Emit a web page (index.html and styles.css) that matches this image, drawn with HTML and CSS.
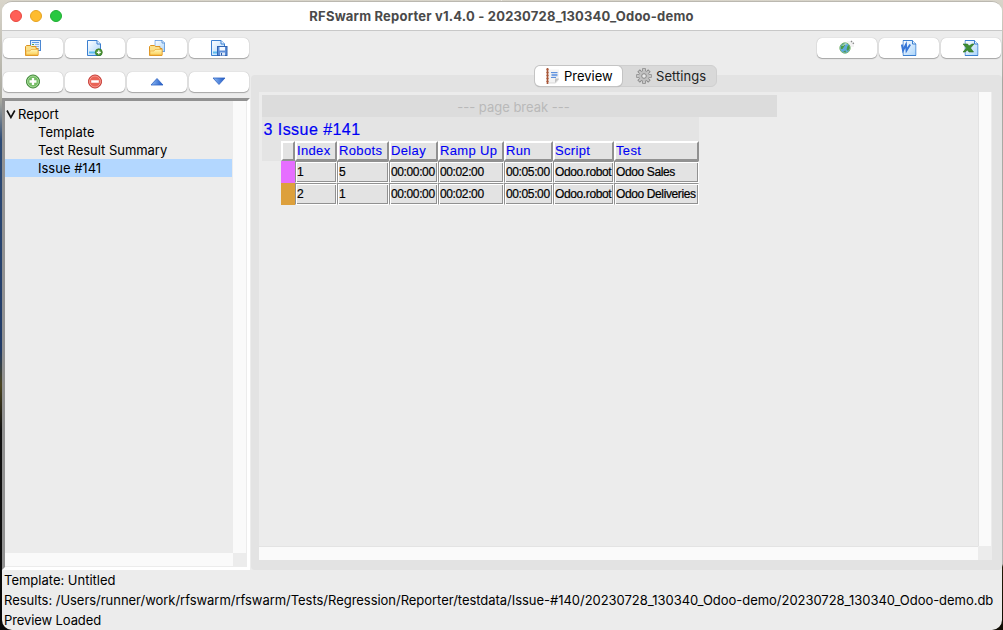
FILE: index.html
```
<!DOCTYPE html>
<html lang="en">
<head>
<meta charset="utf-8">
<title>RFSwarm Reporter</title>
<link rel="stylesheet" href="styles.css">
</head>
<body>
<svg class="defs" width="0" height="0">
  <defs>
    <linearGradient id="gDoc" x1="0" y1="0" x2="1" y2="1"><stop offset="0" stop-color="#ffffff"/><stop offset="1" stop-color="#a9d4fb"/></linearGradient>
    <linearGradient id="gFold" x1="0" y1="0" x2="0" y2="1"><stop offset="0" stop-color="#fff6b8"/><stop offset="1" stop-color="#fbd05a"/></linearGradient>
    <linearGradient id="gBlue" x1="0" y1="0" x2="1" y2="0"><stop offset="0" stop-color="#8fbcf5"/><stop offset="1" stop-color="#1d56c4"/></linearGradient>
    <symbol id="doc" viewBox="0 0 14 16"><path d="M.5.5h9.500l3.500 3.500v11.500H.5z" fill="url(#gDoc)" stroke="#3b7fd0"/><path d="M10 .5V4h3.500" fill="#e6f3ff" stroke="#3b7fd0"/></symbol>
    <symbol id="folder" viewBox="0 0 14 11"><path d="M.5 10.500V1.500l1-1h4l1 1h4.500v2h2v7z" fill="#fbe08a" stroke="#dd9321"/><path d="M1 10V6h4l1-1.500h7V10z" fill="url(#gFold)" stroke="#e9a93a" stroke-width=".7"/></symbol>
  </defs>
</svg>
<div class="window">
  <header class="titlebar">
    <div class="lights"><i class="light red"></i><i class="light amber"></i><i class="light green"></i></div>
    <h1 class="title">RFSwarm Reporter v1.4.0 - 20230728_130340_Odoo-demo</h1>
  </header>
  <main class="content">
    <section class="left">
      <div class="buttons">
        <button class="btn"><svg width="16" height="16"><rect x="5.500" y=".5" width="10" height="10" fill="#e4f1ff" stroke="#4b87d2"/><path d="M7 2.500h7" stroke="#5b9be6"/><path d="M7 4.500h2M7 6.500h2" stroke="#59a03c"/><path d="M10 4.500h4M10 6.500h4M9 8.500h5" stroke="#8db5e6"/><use href="#folder" x="0" y="5" width="14" height="11"/></svg></button>
        <button class="btn"><svg width="16" height="16"><use href="#doc" x="0" y="0" width="14" height="16"/><path d="M2 12.500h8" stroke="#5dbdf0" stroke-width="2"/><circle cx="11.800" cy="12.300" r="3.500" fill="#4e9a37" stroke="#34701f" stroke-width=".7"/><path d="M9.800 12.300h4M11.800 10.300v4" stroke="#fff" stroke-width="1.300"/></svg></button>
        <button class="btn"><svg width="16" height="16"><use href="#doc" x="5.500" y="0" width="10.500" height="12"/><use href="#folder" x="0" y="5" width="14" height="11"/></svg></button>
        <button class="btn"><svg width="17" height="16"><use href="#doc" x="0" y="0" width="14" height="16"/><path d="M2 12.500h5" stroke="#5dbdf0" stroke-width="2"/><rect x="6.500" y="6.500" width="9.500" height="9" fill="#5c8ed8" stroke="#3264b2"/><path d="M8.500 7h5.500v3.500H8.500z" fill="#f4f9ff"/><path d="M9 12.500h5V15.500H9z" fill="#dce8f8"/><path d="M10.500 13v2.500" stroke="#285aa8"/></svg></button>
      </div>
      <div class="buttons second">
        <button class="btn"><svg width="16" height="16"><circle cx="8" cy="7.500" r="6.500" fill="#4da044" stroke="#35802e"/><circle cx="8" cy="7.500" r="5.500" fill="#75bd66" stroke="#b4dfa5" stroke-width=".9"/><path d="M4.500 7.500h7M8 4v7" stroke="#fff" stroke-width="2.300"/></svg></button>
        <button class="btn"><svg width="16" height="16"><circle cx="8" cy="7.500" r="6.500" fill="#dc4038" stroke="#c2332c"/><circle cx="8" cy="7.500" r="5.500" fill="#ea6356" stroke="#f7a49b" stroke-width=".9"/><path d="M4.200 7.500h7.600" stroke="#fff" stroke-width="2.600"/></svg></button>
        <button class="btn"><svg width="14" height="14"><path d="M1 10 7 3.500l6 6.500z" fill="url(#gBlue)" stroke="#2d62c2" stroke-width=".8"/></svg></button>
        <button class="btn"><svg width="14" height="14"><path d="M1 3h12L7 9.500z" fill="url(#gBlue)" stroke="#2d62c2" stroke-width=".8"/></svg></button>
      </div>
      <div class="tree">
        <ul class="nodes">
          <li class="node root"><svg class="chev" width="10" height="10"><path d="m1 1.500 3.900 7 3.900-7" fill="none" stroke="#111" stroke-width="1.600"/></svg>Report</li>
          <li class="node child">Template</li>
          <li class="node child wide">Test Result Summary</li>
          <li class="node child selected">Issue #141</li>
        </ul>
        <div class="vbar"></div>
        <div class="hbar"></div>
      </div>
    </section>
    <section class="right">
      <div class="buttons exports">
        <button class="btn"><svg width="16" height="16"><path d="M8 1h4l3 3v3H8z" fill="#f2f2f2"/><path d="m12 1 3 3" stroke="#888" stroke-width="1.300" stroke-dasharray="1.500 1"/><circle cx="6" cy="8" r="5.200" fill="#5fa9dc" stroke="#7fb873"/><path d="M2 6.500 4.500 3.500l2 .5-1 2-2 3-1.500 0zM8.500 6l1.500-1 .8 3-1.800 3-1.500-1.500zM4 11.500l2.500-1 .5 2z" fill="#4b9c44"/><path d="M3.500 6q2-3 4-2" stroke="#d8f0df" fill="none"/></svg></button>
        <button class="btn"><svg width="16" height="16"><use href="#doc" x="1.500" y="0" width="14" height="16"/><path d="m.8 4.500 1.200 6 3-6 .5 6 3.700-6" fill="none" stroke="#3777d8" stroke-width="1.900"/></svg></button>
        <button class="btn"><svg width="16" height="16"><use href="#doc" x="1.500" y="0" width="14" height="16"/><path d="M0 4h4.500L6 6l3-2h2L7.500 8l3 4H6L4.500 10 2 12H0l3.500-4z" fill="#3f8e32" stroke="#28701e" stroke-width=".6"/></svg></button>
      </div>
      <div class="notebook">
        <nav class="tabs">
          <span class="tab active"><svg width="15" height="16"><path d="M3.500 1.500H14V11l-4 4H3.500z" fill="#f3f3f3"/><path d="M14 10.500h-4V15z" fill="#c3c3c3"/><path d="M3.500 15h7l3.500-4" fill="none" stroke="#ccc" stroke-width=".7"/><path d="M1 1.500h3M1 4.500h3M1 7.500h3M1 10.500h3M1 13.500h3" stroke="#d8a088"/><path d="M2.500 0v16" stroke="#a6573a" stroke-width="1.700"/><path d="M6 4.500h6.500M6 9.500h5" stroke="#5c8fdc" stroke-width="1.200"/><path d="M6.500 7h6" stroke="#7ba5e4" stroke-width="2.400"/></svg>Preview</span>
          <span class="tab idle"><svg width="16" height="16"><g stroke="#858585" stroke-width="3.600"><path d="M8 .3v15.400M.3 8h15.400M2.600 2.600l10.800 10.800M13.400 2.600 2.600 13.400"/></g><g stroke="#c6c6c6" stroke-width="2"><path d="M8 1v14M1 8h14M3.100 3.100l9.800 9.800M12.900 3.100l-9.800 9.800"/></g><circle cx="8" cy="8" r="5" fill="#c0c0c0"/><circle cx="8" cy="8" r="2.300" fill="#e9e9e9" stroke="#888"/></svg>Settings</span>
        </nav>
        <div class="canvas">
          <div class="page">
            <div class="pagebreak">--- page break ---</div>
            <div class="report">
              <h2 class="heading">3 Issue #141</h2>
              <div class="sheet">
                <div class="hd"></div><div class="hd">Index</div><div class="hd">Robots</div><div class="hd">Delay</div><div class="hd">Ramp Up</div><div class="hd">Run</div><div class="hd">Script</div><div class="hd">Test</div>
                <div class="swatch pink"></div><div class="cell">1</div><div class="cell">5</div><div class="cell">00:00:00</div><div class="cell">00:02:00</div><div class="cell">00:05:00</div><div class="cell">Odoo.robot</div><div class="cell">Odoo Sales</div>
                <div class="swatch gold"></div><div class="cell">2</div><div class="cell">1</div><div class="cell">00:00:00</div><div class="cell">00:02:00</div><div class="cell">00:05:00</div><div class="cell">Odoo.robot</div><div class="cell">Odoo Deliveries</div>
              </div>
            </div>
          </div>
          <div class="vbar"></div>
          <div class="hbar"></div>
        </div>
      </div>
    </section>
  </main>
  <footer class="status">
    <div>Template: Untitled</div>
    <div class="path">Results: /Users/runner/work/rfswarm/rfswarm/Tests/Regression/Reporter/testdata/Issue-#140/20230728_130340_Odoo-demo/20230728_130340_Odoo-demo.db</div>
    <div class="state">Preview Loaded</div>
  </footer>
</div>
</body>
</html>
```
FILE: styles.css
```
* { box-sizing: border-box; }
body {
  margin: 0; width: 1003px; height: 630px; overflow: hidden;
  padding: 1px 1px 0 2px;
  background:
    linear-gradient(#d9d5ca 0, #a9a9a0 100px, #2c4a75 140px, #203a66 350px, #4a4420 385px, #111 430px, #080808 100%) 0 0 / 50% 100% no-repeat,
    linear-gradient(#d9d5ca 0, #a8a8a2 80px, #b4b4b2 564px, #241c08 567px, #100c04 100%) 100% 0 / 50% 100% no-repeat;
  font: 13px/18px Inter, sans-serif; color: #000;
}
.defs { position: absolute; }
.window { height: 629px; background: #ececec; border-radius: 10px; overflow: hidden; border-top: 1px solid #bbb8b0; display: flex; flex-direction: column; }
.titlebar { height: 29px; flex: none; background: #fff; border-bottom: 1px solid #c8c8c8; display: grid; grid-template-columns: 100px 1fr 101px; align-items: center; }
.lights { display: flex; gap: 8px; padding-left: 8px; }
.light { width: 12px; height: 12px; border-radius: 50%; border: 1px solid; }
.red { background: #ff5f57; border-color: #e9493f; }
.amber { background: #febc2e; border-color: #e5a322; }
.green { background: #28c840; border-color: #1fae32; }
.title { margin: 0; text-align: center; font-size: 13px; font-weight: 700; line-height: 28px; letter-spacing: .2px; color: #4a4a4a; white-space: nowrap; }
.content { height: 539px; flex: none; display: flex; }
.left { width: 248px; padding-top: 7px; display: flex; flex-direction: column; }
.buttons { display: flex; gap: 2px; padding-left: 1px; height: 20px; flex: none; }
.second { margin-top: 14px; }
.btn { width: 60px; height: 20px; padding: 0; border: 0; border-radius: 5px; background: #fff; box-shadow: 0 0 1px rgba(0,0,0,.3), 0 1px 1px rgba(0,0,0,.28); display: flex; align-items: center; justify-content: center; }
.second .btn { padding-bottom: 1px; }
.tree { margin-top: 6px; flex: 1; border: 3px solid; border-color: #919191 #fff #fff #919191; display: grid; grid-template: 452px 1fr / 228px 1fr; }
.nodes { list-style: none; margin: 0; padding: 4px 0 0; }
.node { height: 18px; line-height: 19px; white-space: nowrap; }
.root { display: flex; padding-left: 1px; gap: 2px; }
.chev { margin-top: 4px; }
.child { padding-left: 33px; }
.wide { letter-spacing: -.03px; }
.selected { background: #b3d7ff; width: 227px; }
.vbar, .hbar { background: #fafafa; }
.vbar { border-right: 1px solid #ececec; }
.hbar { border-bottom: 1px solid #ececec; }
.right { flex: 1; min-width: 0; padding: 7px 0 0 1px; display: flex; flex-direction: column; }
.exports { padding-left: 566px; }
.exports .btn { flex: none; }
.exports svg { margin-top: -1px; }
.notebook { margin-top: 17px; flex: 1; background: #e3e3e3; border-radius: 4px; padding: 0 9px 0 8px; position: relative; display: flex; flex-direction: column; }
.tabs { position: absolute; top: -10px; left: 284px; display: flex; width: 182px; height: 22px; border-radius: 6px; background: #d9d9d9; border: 1px solid #cfcfcf; }
.tab { display: flex; align-items: center; gap: 4px; }
.active { width: 87px; margin: 0 0 -1px -1px; height: 20px; border-radius: 5px; background: #fff; padding-left: 10px; box-shadow: 0 0 0 1px #c4c4c4, 0 1px 1px #999; }
.idle { padding-left: 14px; gap: 4px; color: #222; letter-spacing: .05px; }
.canvas { margin-top: 17px; width: 733px; height: 468px; background: #ececec; display: grid; grid-template: 454px 14px / 719px 1fr; }
.canvas .vbar { border-left: 1px solid #e3e3e3; }
.canvas .hbar { border-top: 1px solid #e3e3e3; border-bottom: 0; }
.page { padding: 3px 0 0 3px; }
.pagebreak { width: 515px; height: 22px; line-height: 25px; background: #dcdcdc; color: #b9b9b9; text-align: center; padding-right: 12px; }
.report { width: 437px; height: 44px; background: #e4e4e4; }
.heading { margin: 0; height: 24px; padding-left: 1.5px; font: 400 16px/25px "Liberation Sans", sans-serif; letter-spacing: .45px; color: #0000f5; -webkit-text-stroke: .2px; }
.sheet { margin-left: 19px; display: grid; grid-template-columns: 14px 42px 52px 49px 66px 49px 61px 85px; grid-template-rows: 20px 22px 22px; font-family: "Liberation Sans", sans-serif; white-space: nowrap; }
.hd { border: 2px solid; border-color: #fff #919191 #919191 #fff; background: #e3e3e3; color: #0000f5; font-size: 13px; line-height: 15px; letter-spacing: .35px; -webkit-text-stroke: .1px; }
.cell { border: 1px solid; border-color: #919191 #fff #fff #919191; box-shadow: inset 1px 1px #fff, inset -1px -1px #919191; background: #e3e3e3; font-size: 12px; line-height: 21px; padding-left: 1px; letter-spacing: -.38px; -webkit-text-stroke: .2px; }
.pink { background: #e66eff; }
.gold { background: #dda03c; }
.status { padding: 0 2px; line-height: 20px; white-space: nowrap; }
.path { letter-spacing: -.034px; }
.state { letter-spacing: -.1px; }
```
